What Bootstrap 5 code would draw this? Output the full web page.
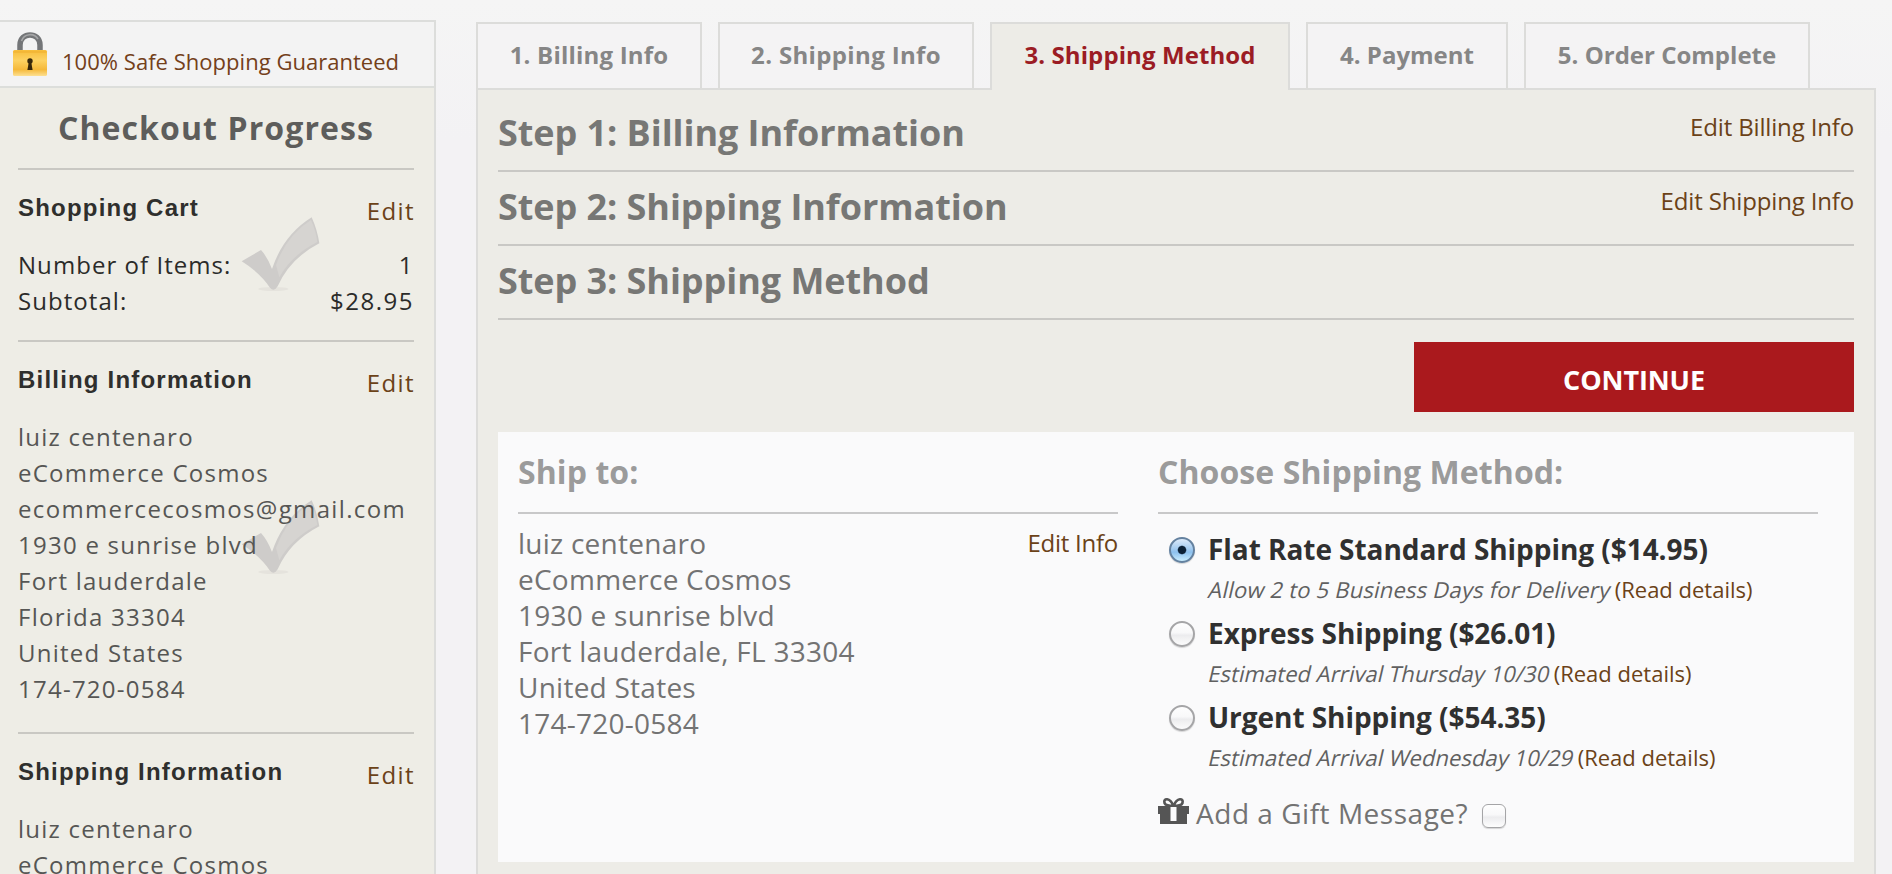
<!DOCTYPE html>
<html lang="en">
<head>
    <meta charset="UTF-8">
    <meta name="viewport" content="width=device-width, initial-scale=1.0">
    <title>Checkout - Shipping Method</title>
    <link href="https://cdn.jsdelivr.net/npm/bootstrap@5.3.0/dist/css/bootstrap.min.css" rel="stylesheet">
    <style>
        body {
            font-family: "Open Sans", sans-serif;
            font-size: 24px;
            line-height: 36px;
            color: #737373;
            background: linear-gradient(#f5f5f5, #f3f2f4 140px);
            height: 100vh;
            overflow: hidden;
        }
        a { color: #6b4218; text-decoration: none; }
        h2, h3, h4, p { margin: 0; }

        /* sidebar */
        .progress-side {
            width: 436px;
            height: 880px;
            margin-top: 20px;
            border: 2px solid #dcdddb;
            border-left: 0;
            background: #eeede6;
            letter-spacing: 1.25px;
            color: #565654;
        }
        .safe-bar {
            height: 66px;
            padding: 10px 0 0 12px;
            border-bottom: 2px solid #dcdedb;
            background: #f3f3f3;
            font-size: 22px;
            letter-spacing: .03px;
        }
        .safe-bar a { margin: 5px 0 0 14px; line-height: 49px; color: #73401a; }
        .side-body { padding: 0 20px 0 18px; }
        .side-body h2 {
            font-size: 32px;
            font-weight: 700;
            line-height: 80px;
            letter-spacing: 1.1px;
            color: #5d5d5b;
        }
        .side-section {
            position: relative;
            border-top: 2px solid #c9c8c3;
            padding: 20px 0 21px;
        }
        .side-section.billing { padding-bottom: 25px; }
        .side-section h3 {
            font: 700 24px/36px "Liberation Sans", Arial, sans-serif;
            letter-spacing: 1.2px;
            color: #2f2f2d;
        }
        .side-section .edit { margin: 3px -1px 18px 0; letter-spacing: 1.4px; }
        .side-section p { position: relative; }
        .cart-lines { color: #2b2b29; letter-spacing: 1.05px; }
        .cart-lines .amount { letter-spacing: 1.5px; }
        .email { letter-spacing: 1.35px; }
        .tick { position: absolute; left: 212px; top: 30px; }
        .billing .tick { top: 141px; }

        /* tabs */
        .checkout { width: 1400px; margin: 22px 0 0 40px; }
        .step-tab {
            height: 66px;
            line-height: 62px;
            border: 2px solid #dcdcda;
            border-bottom: 0;
            background: #f4f3f4;
            font-weight: 700;
            color: #868686;
            white-space: nowrap;
            text-align: center;
        }
        .step-tab.current {
            height: 68px;
            margin-bottom: -2px;
            position: relative;
            background: #edece7;
            color: #9b1c24;
        }
        .w-billing { width: 226px; letter-spacing: .2px; }
        .w-shipping { width: 256px; letter-spacing: .35px; }
        .w-method { width: 300px; letter-spacing: .1px; }
        .w-payment { width: 202px; }
        .w-complete { width: 286px; }

        /* main panel */
        .steps-panel {
            height: 800px;
            padding: 8px 20px 0;
            border: 2px solid #dcdcda;
            background: #edece7;
        }
        .step-row { padding-bottom: 2px; border-bottom: 2px solid #c9c8c5; }
        .step-row h2 { font-size: 36px; font-weight: 700; line-height: 70px; letter-spacing: -.06px; color: #777775; }
        .step-row a { line-height: 57px; letter-spacing: -.15px; }
        .btn-continue {
            width: 440px;
            height: 70px;
            margin-top: 22px;
            padding: 7px 0 0;
            border: 0;
            border-radius: 0;
            background: #aa191d;
            color: #fff;
            font-size: 27px;
            font-weight: 700;
            letter-spacing: -.1px;
        }
        .btn-continue:hover { background: #92151a; color: #fff; }
        .ship-box {
            height: 430px;
            margin-top: 20px;
            padding: 0 36px 0 20px;
            gap: 40px;
            background: #fafafb;
            font-size: 28px;
        }
        .ship-box h3 {
            font-size: 32px;
            font-weight: 700;
            line-height: 80px;
            letter-spacing: .08px;
            color: #9b9b9b;
            border-bottom: 2px solid #c8c8c9;
        }
        .ship-to { width: 600px; }
        .ship-to .address { margin-top: 11px; letter-spacing: .25px; }
        .ship-to .address a { font-size: 24px; letter-spacing: -.25px; }
        .ship-method { width: 660px; }
        .options { padding: 17px 0 0 11px; }
        .option { height: 84px; }
        .option label { font-weight: 700; letter-spacing: -.05px; color: #303030; }
        .option .hint { line-height: 45px; font-size: 22px; color: #606060; white-space: nowrap; }
        .option .hint span { display: inline-block; margin: 0 -2px 0 1px; letter-spacing: .05px; transform: skewX(-13deg); }
        .option .hint .wide { letter-spacing: .2px; }
        .ship-method input {
            appearance: none;
            flex-shrink: 0;
            border: 2px solid #a5a5a7;
            background: linear-gradient(#fff, #f8f8f9 45%, #ececee 55%, #fff) border-box;
            box-shadow: 0 1px 1px rgba(0, 0, 0, .15);
        }
        .option input { width: 26px; height: 26px; margin: 6px 13px 0 0; border-radius: 50%; }
        .option input:checked {
            border-color: #64819f;
            background: radial-gradient(circle at 50% 50%, #0b2036 3.6px, transparent 4.8px),
                        linear-gradient(#dceafa, #a3cbf0 45%, #8cc0ee 60%, #c9edff);
        }
        .gift-row { height: 58px; letter-spacing: .52px; }
        .gift-row label { padding-top: 2px; }
        .gift-row input { width: 24px; height: 24px; margin: 8px 0 0 14px; border-radius: 6px; border-width: 1.5px; }
        .gift-row svg { margin: -3px 6px 0 0; }
    </style>
</head>
<body class="d-flex align-items-start">

<svg class="d-none">
    <symbol id="tick" viewBox="0 0 300 330">
        <ellipse cx="130" cy="267" rx="45" ry="6" fill="#e5e3dd"/>
        <path d="M35 184 L93 150 Q113 172 126 207 Q160 105 245 52 Q262 90 268 130 Q180 175 143 259 Q132 277 120 263 Q90 218 35 184Z" fill="#cecccA"/>
        <path d="M138 195 Q170 105 243 60 Q258 92 262 126 Q185 165 148 232Z" fill="#d6d4d1"/>
    </symbol>
</svg>

<aside class="progress-side flex-shrink-0">
    <div class="safe-bar d-flex align-items-start">
        <svg width="36" height="45" viewBox="0 0 36 45">
            <defs>
                <linearGradient id="gold" x1="0" y1="0" x2="0" y2="1">
                    <stop offset="0" stop-color="#f6bd3b"/>
                    <stop offset=".4" stop-color="#fdd262"/>
                    <stop offset=".75" stop-color="#f5b93a"/>
                    <stop offset="1" stop-color="#fde092"/>
                </linearGradient>
            </defs>
            <path d="M8 19 V13 C8 -.5 28 -.5 28 13 V19" fill="none" stroke="#747678" stroke-width="5.5"/>
            <path d="M9.5 9 C12 1.5 22 .5 26 7" fill="none" stroke="#a5a6a7" stroke-width="1.6"/>
            <rect x="1" y="18" width="34" height="26" rx="1.5" fill="url(#gold)"/>
            <path d="M1.5 20 H34.5" stroke="#f0ae2d" stroke-width="1.2"/>
            <circle cx="18" cy="29" r="2.7" fill="#35260a"/>
            <path d="M16.8 30 H19.2 L20.6 38 H15.4Z" fill="#35260a"/>
        </svg>
        <a href="#">100% Safe Shopping Guaranteed</a>
    </div>
    <div class="side-body">
        <h2 class="text-center">Checkout Progress</h2>
        <section class="side-section">
            <svg class="tick" width="100" height="110"><use href="#tick"/></svg>
            <div class="d-flex justify-content-between align-items-start">
                <h3>Shopping Cart</h3>
                <a class="edit" href="#">Edit</a>
            </div>
            <p class="cart-lines d-flex justify-content-between"><span>Number of Items:</span><span class="amount">1</span></p>
            <p class="cart-lines d-flex justify-content-between"><span>Subtotal:</span><span class="amount">$28.95</span></p>
        </section>
        <section class="side-section billing">
            <svg class="tick" width="100" height="110"><use href="#tick"/></svg>
            <div class="d-flex justify-content-between align-items-start">
                <h3>Billing Information</h3>
                <a class="edit" href="#">Edit</a>
            </div>
            <p>luiz centenaro<br>eCommerce Cosmos<br><span class="email">ecommercecosmos@gmail.com</span><br>1930 e sunrise blvd<br>Fort lauderdale<br>Florida 33304<br>United States<br>174-720-0584</p>
        </section>
        <section class="side-section">
            <div class="d-flex justify-content-between align-items-start">
                <h3>Shipping Information</h3>
                <a class="edit" href="#">Edit</a>
            </div>
            <p>luiz centenaro<br>eCommerce Cosmos</p>
        </section>
    </div>
</aside>

<main class="checkout flex-shrink-0">
    <nav class="d-flex gap-3">
        <a class="step-tab w-billing" href="#">1. Billing Info</a>
        <a class="step-tab w-shipping" href="#">2. Shipping Info</a>
        <a class="step-tab w-method current" href="#">3. Shipping Method</a>
        <a class="step-tab w-payment" href="#">4. Payment</a>
        <a class="step-tab w-complete" href="#">5. Order Complete</a>
    </nav>
    <div class="steps-panel">
        <div class="step-row d-flex justify-content-between align-items-start">
            <h2>Step 1: Billing Information</h2>
            <a href="#">Edit Billing Info</a>
        </div>
        <div class="step-row d-flex justify-content-between align-items-start">
            <h2>Step 2: Shipping Information</h2>
            <a href="#">Edit Shipping Info</a>
        </div>
        <div class="step-row">
            <h2>Step 3: Shipping Method</h2>
        </div>
        <button type="button" class="btn btn-continue d-block ms-auto">CONTINUE</button>

        <div class="ship-box d-flex">
            <div class="ship-to">
                <h3>Ship to:</h3>
                <div class="address d-flex justify-content-between align-items-start">
                    <p>luiz centenaro<br>eCommerce Cosmos<br>1930 e sunrise blvd<br>Fort lauderdale, FL 33304<br>United States<br>174-720-0584</p>
                    <a href="#">Edit Info</a>
                </div>
            </div>
            <form class="ship-method">
                <h3>Choose Shipping Method:</h3>
                <div class="options">
                    <div class="option d-flex align-items-start">
                        <input type="radio" name="method" id="flat" checked>
                        <div>
                            <label class="d-block" for="flat">Flat Rate Standard Shipping ($14.95)</label>
                            <div class="hint"><span class="wide">Allow 2 to 5 Business Days for Delivery</span> <a href="#">(Read details)</a></div>
                        </div>
                    </div>
                    <div class="option d-flex align-items-start">
                        <input type="radio" name="method" id="express">
                        <div>
                            <label class="d-block" for="express">Express Shipping ($26.01)</label>
                            <div class="hint"><span>Estimated Arrival Thursday 10/30</span> <a href="#">(Read details)</a></div>
                        </div>
                    </div>
                    <div class="option d-flex align-items-start">
                        <input type="radio" name="method" id="urgent">
                        <div>
                            <label class="d-block" for="urgent">Urgent Shipping ($54.35)</label>
                            <div class="hint"><span>Estimated Arrival Wednesday 10/29</span> <a href="#">(Read details)</a></div>
                        </div>
                    </div>
                </div>
                <div class="gift-row d-flex align-items-center">
                    <svg width="32" height="28" viewBox="0 0 32 28">
                        <path d="M15.5 9 C12 0 5 1 6.5 6 C7.5 9 12 9 15.5 9 C19 9 23.5 9 24.5 6 C26 1 19 0 15.5 9Z" fill="none" stroke="#555" stroke-width="2.6"/>
                        <path d="M0 9 H31 V17 H29 V27 H2 V17 H0Z" fill="#555"/>
                        <path d="M12.5 10 H18.5 V24 H12.5Z" fill="#fafafb"/>
                    </svg>
                    <label for="gift">Add a Gift Message?</label>
                    <input type="checkbox" id="gift">
                </div>
            </form>
        </div>
    </div>
</main>

<script src="https://cdn.jsdelivr.net/npm/bootstrap@5.3.0/dist/js/bootstrap.bundle.min.js"></script>
</body>
</html>
